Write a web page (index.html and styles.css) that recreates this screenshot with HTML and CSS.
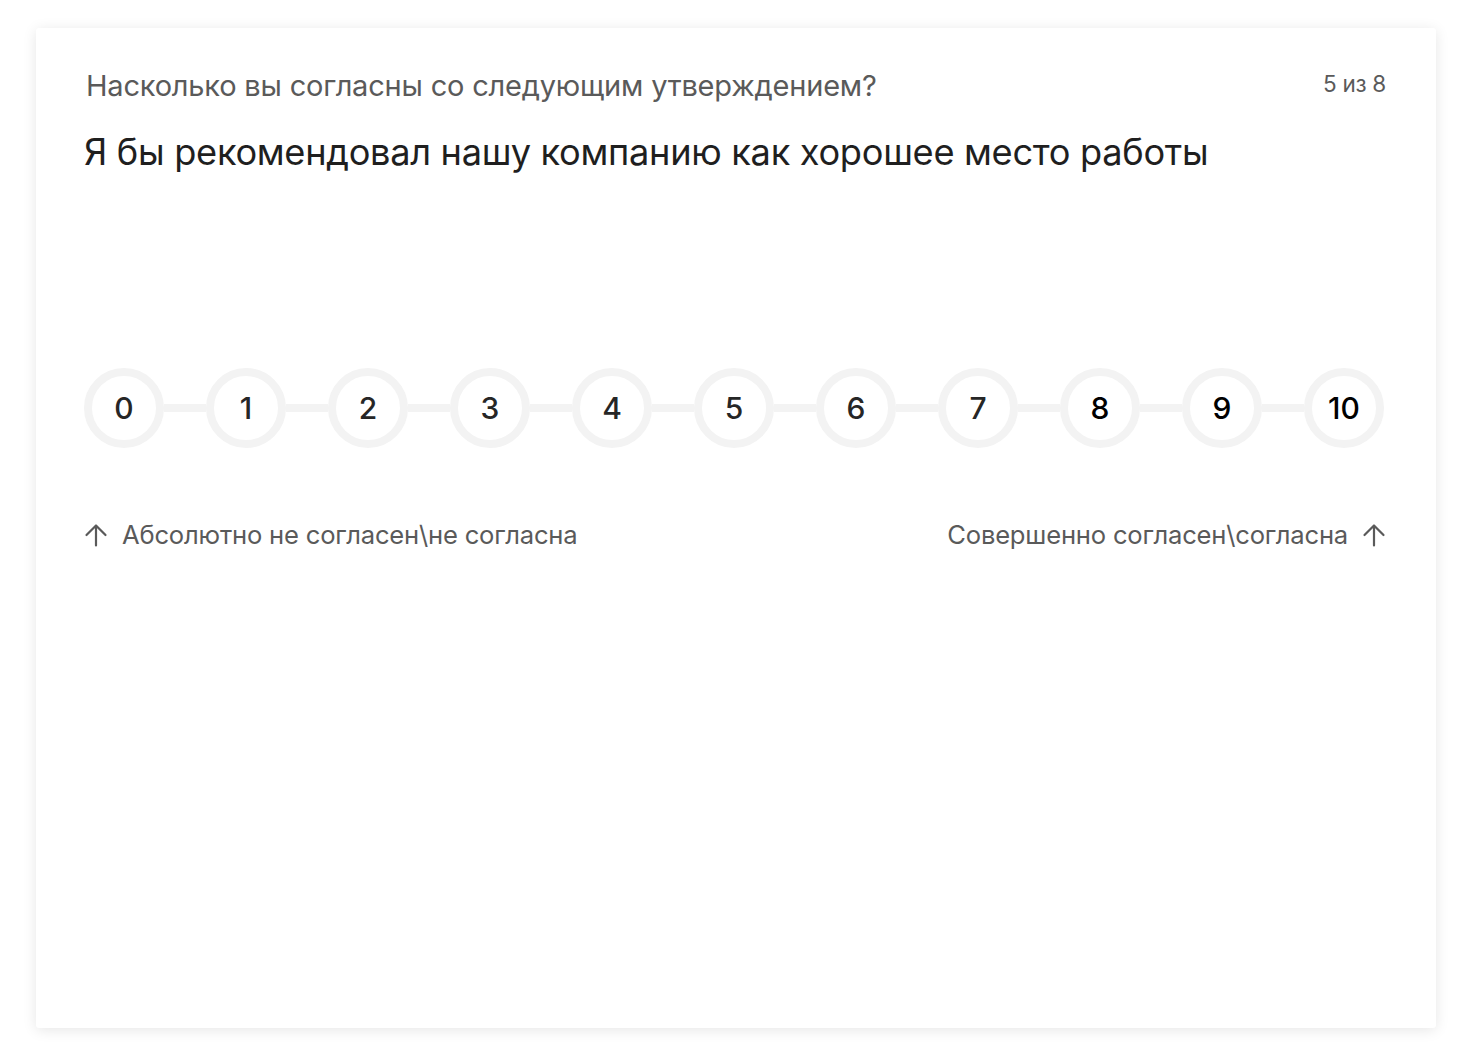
FILE: index.html
```html
<!DOCTYPE html>
<html lang="ru">
<head>
<meta charset="utf-8">
<link rel="stylesheet" href="styles.css">
</head>
<body>
<div class="card">
  <div class="head">
    <div class="prompt">Насколько вы согласны со следующим утверждением?</div>
    <div class="counter">5 из 8</div>
  </div>
  <div class="statement">Я бы рекомендовал нашу компанию как хорошее место работы</div>
  <div class="scale">
    <div class="dot">0</div><div class="line"></div>
    <div class="dot">1</div><div class="line"></div>
    <div class="dot">2</div><div class="line"></div>
    <div class="dot">3</div><div class="line"></div>
    <div class="dot">4</div><div class="line"></div>
    <div class="dot">5</div><div class="line"></div>
    <div class="dot">6</div><div class="line"></div>
    <div class="dot">7</div><div class="line"></div>
    <div class="dot dark">8</div><div class="line"></div>
    <div class="dot dark">9</div><div class="line"></div>
    <div class="dot dark">10</div>
  </div>
  <div class="legend">
    <div class="lbl">
      <svg class="arrow" viewBox="0 0 24 24" width="24" height="24"><path d="M12 22.5V2.5M2.5 12L12 2.5l9.5 9.5" fill="none" stroke="currentColor" stroke-width="2.2" stroke-linecap="round" stroke-linejoin="round"/></svg>
      <span>Абсолютно не согласен\не согласна</span>
    </div>
    <div class="lbl">
      <span>Совершенно согласен\согласна</span>
      <svg class="arrow" viewBox="0 0 24 24" width="24" height="24"><path d="M12 22.5V2.5M2.5 12L12 2.5l9.5 9.5" fill="none" stroke="currentColor" stroke-width="2.2" stroke-linecap="round" stroke-linejoin="round"/></svg>
    </div>
  </div>
</div>
</body>
</html>
```
FILE: styles.css
```css
* { box-sizing: border-box; }
html, body { margin: 0; padding: 0; background: #fff; }
body {
  font-family: Inter, "Noto Sans", "Liberation Sans", sans-serif;
  padding: 28px 36px;
}
.card {
  width: 1400px;
  height: 1000px;
  background: #fff;
  border-radius: 3px;
  box-shadow: 0 2px 14px rgba(0,0,0,0.10);
  padding: 40px 50px 0 48px;
}
.head {
  display: flex;
  justify-content: space-between;
  align-items: flex-start;
}
.prompt {
  font-size: 29px;
  line-height: 36px;
  color: #5a5a5a;
  margin-left: 2px;
  letter-spacing: -0.2px;
}
.counter {
  font-size: 22.5px;
  line-height: 36px;
  color: #5a5a5a;
  margin-top: -2px;
  letter-spacing: -0.3px;
}
.statement {
  margin-top: 25px;
  font-size: 36.2px;
  line-height: 46px;
  color: #1f1f1f;
  letter-spacing: -0.3px;
}
.scale {
  margin-top: 193px;
  display: flex;
  align-items: center;
  width: 1300px;
}
.dot {
  width: 80px;
  height: 80px;
  flex: none;
  border-radius: 50%;
  border: 8px solid #f3f3f3;
  display: flex;
  align-items: center;
  justify-content: center;
  font-size: 30px;
  font-weight: 500;
  color: #262626;
}
.dot.dark { color: #000; }
.line {
  flex: 1;
  height: 8px;
  background: #f3f3f3;
}
.legend {
  margin-top: 71px;
  display: flex;
  justify-content: space-between;
  width: 1302px;
}
.lbl {
  display: flex;
  align-items: center;
  gap: 14px;
  font-size: 25.6px;
  color: #5a5a5a;
  letter-spacing: -0.2px;
}
.arrow { color: #5a5a5a; flex: none; }
```
